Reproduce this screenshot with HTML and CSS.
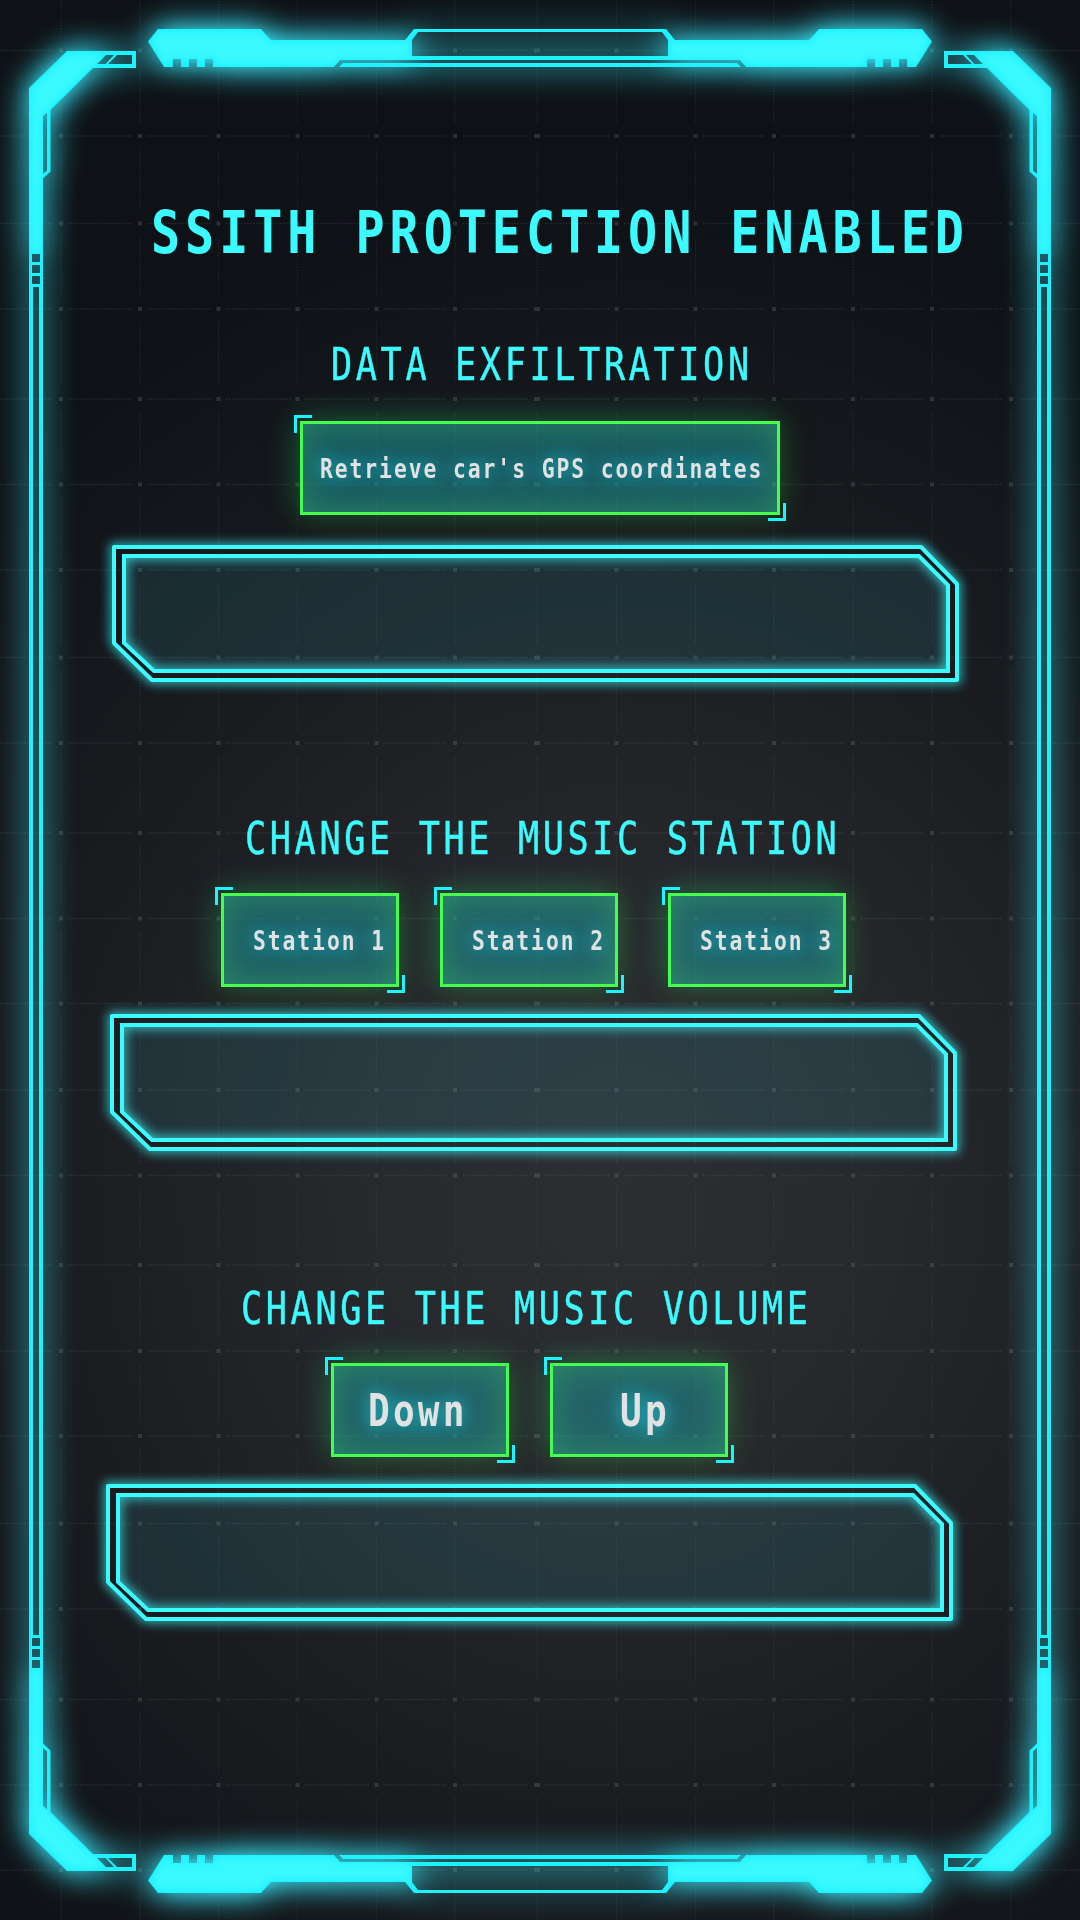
FILE: index.html
```html
<!DOCTYPE html>
<html lang="en">
<head>
<meta charset="utf-8">
<title>SSITH Protection</title>
<link rel="stylesheet" href="styles.css">
</head>
<body>
<svg class="grid" viewBox="0 0 1080 1920" aria-hidden="true">
  <defs>
    <g id="row">
      <path class="dots" d="M0 0H53M68 0H132M147 0H211M226 0H290M305 0H369M384 0H447M463 0H529M545 0H609M624 0H688M703 0H766M782 0H845M861 0H924M940 0H1003M1019 0H1080"/>
      <path class="dots dots-v" d="M61 13V74M140 13V74M218.5 13V74M297.5 13V74M376.5 13V74M455 13V74M537 13V74M616.5 13V74M695.5 13V74M774 13V74M853 13V74M932 13V74M1011 13V74"/>
      <path class="nodes" d="M59 0h4M138 0h4M216.500 0h4M295.500 0h4M374.500 0h4M453 0h4M534 0h6M614.500 0h4M693.500 0h4M772 0h4M851 0h4M930 0h4M1009 0h4"/>
    </g>
  </defs>
  <use href="#row" y="-36"/><use href="#row" y="50.500"/><use href="#row" y="136"/><use href="#row" y="223.500"/>
  <use href="#row" y="309"/><use href="#row" y="399"/><use href="#row" y="484.500"/><use href="#row" y="570"/>
  <use href="#row" y="657.500"/><use href="#row" y="743"/><use href="#row" y="833"/><use href="#row" y="918.500"/>
  <use href="#row" y="1003.500"/><use href="#row" y="1090"/><use href="#row" y="1175.500"/><use href="#row" y="1265"/>
  <use href="#row" y="1351"/><use href="#row" y="1436"/><use href="#row" y="1523.500"/><use href="#row" y="1609"/>
  <use href="#row" y="1699.500"/><use href="#row" y="1785"/><use href="#row" y="1870"/>
</svg>

<svg class="frame" viewBox="0 0 1080 1920" aria-hidden="true">
  <defs>
    <filter id="frame-glow" filterUnits="userSpaceOnUse" x="-60" y="-60" width="1200" height="2040" color-interpolation-filters="sRGB">
      <feGaussianBlur in="SourceGraphic" stdDeviation="16" result="wide"/>
      <feGaussianBlur in="SourceGraphic" stdDeviation="4.500" result="core"/>
      <feComponentTransfer in="core" result="lift"><feFuncR type="linear" slope="0" intercept=".24"/><feFuncG type="linear" slope="0" intercept=".98"/><feFuncB type="linear" slope="0" intercept="1"/><feFuncA type="linear" slope="1.800" intercept="-.9"/></feComponentTransfer>
      <feComposite in="lift" in2="SourceGraphic" operator="in" result="inner"/>
      <feComponentTransfer in="wide" result="halo"><feFuncR type="linear" slope="0" intercept=".22"/><feFuncG type="linear" slope="0" intercept=".87"/><feFuncB type="linear" slope="0" intercept=".94"/><feFuncA type="linear" slope="1.450"/></feComponentTransfer>
      <feMerge><feMergeNode in="halo"/><feMergeNode in="SourceGraphic"/><feMergeNode in="inner"/></feMerge>
    </filter>
    <path id="corner" fill-rule="evenodd" d="M29 88L67 51H136V68H93L50.500 110V171.500L43 178.500V961H39V287H33V961H29ZM97 64H105.500L114 55H106ZM108 64H132V55H117ZM43 116V174L47 170.500V112.500ZM32 254V262H40V254ZM32 265V273H40V265ZM32 276V284H40V276Z"/>
    <path id="bar" fill-rule="evenodd" d="M148 41.500L158 29H261L271 40H405L414 29H666L675 40H809L819 29H922L932 41.500L916 67H907V59H899V67H891V59H883V67H875V59H867V67H746L740 60H340L334 67H213V59H205V67H197V59H189V67H181V59H173V67H164ZM412 40V56H668V40L662 32H418ZM339 67L343 63H737L741 67Z"/>
  </defs>
  <g class="frame-lines" filter="url(#frame-glow)">
    <use href="#corner"/>
    <use href="#corner" transform="translate(1080 0) scale(-1 1)"/>
    <use href="#corner" transform="translate(0 1922) scale(1 -1)"/>
    <use href="#corner" transform="translate(1080 1922) scale(-1 -1)"/>
    <use href="#bar"/>
    <use href="#bar" transform="translate(0 1922) scale(1 -1)"/>
  </g>
</svg>

<svg class="defs" aria-hidden="true">
  <defs>
    <filter id="panel-glow" filterUnits="userSpaceOnUse" x="-40" y="-40" width="930" height="220"><feGaussianBlur stdDeviation="5.500"/></filter>
    <mask id="channel" maskUnits="userSpaceOnUse" x="-40" y="-40" width="930" height="220">
      <path fill="#fff" fill-rule="evenodd" d="M-40 -40H890V180H-40ZM2 2H809L845 39V135H40L2 98ZM12 11V98L42 126H836V40L807 11Z"/>
    </mask>
    <g id="panel-art">
      <path class="panel-fill" d="M12 11H807L836 40V126H42L12 98Z"/>
      <g mask="url(#channel)"><g class="panel-halo" filter="url(#panel-glow)">
        <path d="M2 2H809L845 39V135H40L2 98Z"/><path d="M12 11H807L836 40V126H42L12 98Z"/>
      </g></g>
      <path class="panel-line round" d="M2 2H809L845 39V135H40L2 98Z"/>
      <path class="panel-line" d="M12 11H807L836 40V126H42L12 98Z"/>
    </g>
  </defs>
</svg>

<main class="screen">
  <h1 class="title">SSITH PROTECTION ENABLED</h1>

  <section class="group exfiltration">
    <h2 class="heading">DATA EXFILTRATION</h2>
    <div class="actions">
      <button class="action wide"><span class="label">Retrieve car's GPS coordinates</span></button>
    </div>
    <svg class="panel" viewBox="0 0 847 137"><use href="#panel-art"/></svg>
  </section>

  <section class="group station">
    <h2 class="heading">CHANGE THE MUSIC STATION</h2>
    <div class="actions">
      <button class="action"><span class="label">Station 1</span></button>
      <button class="action"><span class="label">Station 2</span></button>
      <button class="action last"><span class="label">Station 3</span></button>
    </div>
    <svg class="panel" viewBox="0 0 847 137"><use href="#panel-art"/></svg>
  </section>

  <section class="group volume">
    <h2 class="heading">CHANGE THE MUSIC VOLUME</h2>
    <div class="actions">
      <button class="action large"><span class="label">Down</span></button>
      <button class="action large up"><span class="label">Up</span></button>
    </div>
    <svg class="panel" viewBox="0 0 847 137"><use href="#panel-art"/></svg>
  </section>
</main>
</body>
</html>
```

FILE: styles.css
```css
*, *::before, *::after { box-sizing: border-box; }

body {
  margin: 0;
  width: 1080px;
  height: 1920px;
  overflow: hidden;
  position: relative;
  background: radial-gradient(ellipse 900px 1000px at 620px 1190px, #2d2e32 0%, #27292d 28%, #1a1c20 62%, #0e1216 100%);
  font-family: "DejaVu Sans Mono", "Liberation Mono", monospace;
  color: #3cfbff;
}

.grid, .frame {
  position: absolute;
  inset: 0;
  width: 1080px;
  height: 1920px;
}

.defs { position: absolute; width: 0; height: 0; }

.dots { fill: none; stroke: rgba(150, 165, 165, .17); stroke-width: 1.3; stroke-dasharray: 1.5 1.5; }
.dots-v { stroke: rgba(150, 165, 165, .13); }
.nodes { fill: none; stroke: rgba(160, 170, 170, .2); stroke-width: 4; }

.frame-lines { fill: #1ff2ff; }

.screen {
  position: relative;
  display: flex;
  flex-direction: column;
  align-items: flex-start;
  padding-top: 203px;
}

.title, .heading {
  margin: 0;
  white-space: nowrap;
  transform-origin: 0 0;
}

.title {
  margin-left: 151px;
  font-size: 59px;
  line-height: 59px;
  font-weight: 700;
  letter-spacing: 6.04px;
  transform: scaleX(.82);
}

.heading {
  font-size: 44px;
  line-height: 44px;
  font-weight: 400;
  letter-spacing: 4.52px;
  transform: scaleX(.8);
  -webkit-text-stroke: .5px currentColor;
}

.group {
  display: flex;
  flex-direction: column;
  align-items: flex-start;
  width: 1080px;
}

.exfiltration { margin-top: 81px; }
.station { margin-top: 135px; }
.volume { margin-top: 136px; }

.exfiltration .heading { margin-left: 331px; }
.station .heading { margin-left: 245px; }
.volume .heading { margin-left: 241px; }

.actions { display: flex; gap: 41px; margin: 32px 0 27px; }
.exfiltration .actions { margin: 34px 0 30px 300px; }
.station .actions { margin-left: 221px; }
.volume .actions { margin-left: 331px; }

.action {
  position: relative;
  display: flex;
  align-items: center;
  width: 178px;
  height: 94px;
  padding: 2px 0 0 29px;
  border: 3px solid #44ff4f;
  background: rgba(32, 150, 158, .52);
  box-shadow: 0 0 30px rgba(68, 255, 50, .25), -8px -8px 36px rgba(28, 170, 215, .12), inset 0 0 34px rgba(60, 235, 110, .33);
  color: #e2e2e2;
  font: 700 26px/26px "DejaVu Sans Mono", "Liberation Mono", monospace;
}

.action.wide { width: 480px; padding-left: 17px; }
.action.last { margin-left: 9px; }
.action.large { padding-left: 34px; font-size: 44px; line-height: 44px; }
.action.up { padding-left: 67px; }

/* Angle brackets hugging the opposite corners of a button */
.action::before, .action::after {
  content: "";
  position: absolute;
  width: 18px;
  height: 18px;
  border: 0 solid #1cf5ff;
}
.action::before { left: -9px; top: -9px; border-width: 3px 0 0 3px; }
.action::after { right: -9px; bottom: -9px; border-width: 0 3px 3px 0; }

.label {
  white-space: nowrap;
  letter-spacing: 2.37px;
  transform: scaleX(.82);
  transform-origin: 0 50%;
  text-shadow: 0 0 18px rgba(34, 190, 205, .75), 0 0 26px rgba(34, 190, 205, .75);
}
.large .label { letter-spacing: 3.87px; }

.panel { width: 847px; height: 137px; overflow: visible; display: block; }
.exfiltration .panel { margin-left: 112px; }
.station .panel { margin-left: 110px; }
.volume .panel { margin-left: 106px; }

.panel-fill { fill: rgba(60, 170, 190, .15); }
.panel-halo { fill: none; stroke: #3cf0f5; stroke-width: 8; opacity: .75; }
.panel-line { fill: none; stroke: #3cfbff; stroke-width: 4; }
.panel-line.round { stroke-linejoin: round; }
```
